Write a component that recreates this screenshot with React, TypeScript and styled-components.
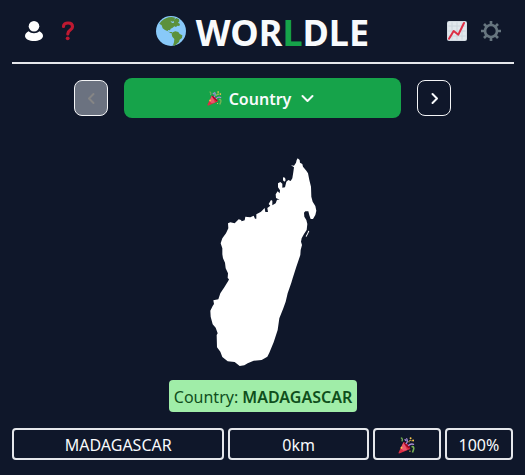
import React from "react";
import styled, { createGlobalStyle } from "styled-components";

const GlobalStyle = createGlobalStyle`
  *, *::before, *::after { box-sizing: border-box; }
  body {
    margin: 0;
    background: #0f172a;
    color: #f8fafc;
    font-family: "Segoe UI", "Noto Sans", "Open Sans", sans-serif;
    font-size: 16px;
    line-height: 24px;
  }
  button { font: inherit; color: inherit; margin: 0; padding: 0; cursor: pointer; }
  svg { display: block; flex: none; }
`;

const Page = styled.main`
  display: flex;
  flex-direction: column;
  padding: 0 11px 0 12px;
`;

const Header = styled.header`
  display: flex;
  align-items: center;
  justify-content: space-between;
  height: 64px;
  padding: 0 13px 0 12px;
  border-bottom: 2px solid #e5e7eb;
`;

const IconGroup = styled.div`
  display: flex;
  align-items: center;
  gap: 14px;
`;

const IconButton = styled.button`
  display: flex;
  border: 0;
  background: none;
`;

const Title = styled.h1`
  display: flex;
  align-items: center;
  gap: 10px;
  margin: 0;
  padding-top: 3px;
  font-size: 36px;
  line-height: 40px;
  font-weight: 700;
`;

const GlobeSlot = styled.span`
  padding-bottom: 3px;
`;

const Accent = styled.span`
  color: #16a34a;
`;

const RoundNav = styled.nav`
  display: flex;
  align-items: center;
  justify-content: center;
  gap: 16px;
  padding: 14px 63px 0 62px;
`;

const StepButton = styled.button`
  display: flex;
  flex: none;
  align-items: center;
  justify-content: center;
  width: 34px;
  height: 36px;
  border: 1px solid #f3f4f6;
  border-radius: 8px;
  background: transparent;
  &:disabled {
    background: #6b7280;
    color: #858585;
    cursor: default;
  }
`;

const RoundButton = styled.button`
  display: flex;
  flex: 1;
  align-items: center;
  justify-content: center;
  height: 40px;
  padding-right: 4px;
  border: 0;
  border-radius: 8px;
  background: #16a34a;
  font-weight: 600;
`;

const RoundName = styled.span`
  margin: 2px 10px 0 7px;
`;

const MapFigure = styled.figure`
  display: flex;
  justify-content: center;
  margin: 0;
  padding: 40px 0 13px;
`;

const Answer = styled.p`
  align-self: center;
  margin: 0;
  padding: 5px 5px 3px;
  border-radius: 4px;
  background: #a0eda8;
  color: #0f4f1c;
  strong { font-weight: 600; }
`;

const GuessRow = styled.div`
  display: grid;
  grid-template-columns: repeat(7, 1fr);
  gap: 4px;
  margin: 16px 1px 0 0;
`;

const Cell = styled.div<{ $span?: number }>`
  grid-column: span ${(p) => p.$span ?? 1};
  display: flex;
  align-items: center;
  justify-content: center;
  height: 32px;
  padding-top: 2px;
  border: 2px solid #e5e7eb;
  border-radius: 4px;
`;

const UserIcon = () => (
  <svg width="20" height="22" viewBox="0 0 20 22" fill="#fff">
    <circle cx="10" cy="6.2" r="5.3" />
    <path d="M4.5 11.3C2.5 12.3 1 14 1 16c0 3 4.5 5 9 5s9-2 9-5c0-2-1.5-3.7-3.5-4.7-1.4 1.3-3.3 2-5.5 2s-4.1-.7-5.5-2z" />
  </svg>
);

const QuestionIcon = () => (
  <svg width="20" height="22" viewBox="0 0 20 22">
    <path d="M5.5 6.4C5.5 4.2 7.6 3 10 3c2.7 0 4.5 1.5 4.5 3.7 0 3.8-4.7 2.9-4.7 7.2" fill="none" stroke="#be1931" strokeWidth="3.2" strokeLinecap="round" />
    <circle cx="9.7" cy="18.3" r="1.9" fill="#be1931" />
  </svg>
);

const GlobeIcon = () => (
  <svg width="30" height="30" viewBox="0 0 90 90">
    <circle cx="45" cy="45" r="45" fill="#88c9f9" />
    <path fill="#5c913b" d="M16 16C24 8 34 3 47 3L58 5 54 11 61 6 69 10 70 16 66 20 72 24 70 30 64 29 60 33 55 31 50 35 44 38 42 43 36 42 35 46 41 48 48 48 50 53 43 51 34 45 27 42 20 37 17 28 10 23z" />
    <path fill="#88c9f9" d="m44 14 4 3 6-1 0 4-5 1-4-3z" />
    <path fill="#5c913b" d="M50 49L58 46 67 48 71 54 79 58 78 66 71 71 69 78 62 84 56 89 51 88 54 79 55 69 49 62 47 55z" />
  </svg>
);

const ChartIcon = () => (
  <svg width="20" height="20" viewBox="0 0 60 60">
    <rect width="60" height="60" rx="6" fill="#ccd6dd" />
    <rect x="2" y="2" width="56" height="56" rx="5" fill="#e1e8ed" />
    <path d="M15 4v52M30 4v52M45 4v52M4 15h52M4 30h52M4 45h52" stroke="#ccd6dd" strokeWidth="3" />
    <path d="m6 53 14-23 14 11L51 6" fill="none" stroke="#dd2e44" strokeWidth="6" strokeLinecap="round" strokeLinejoin="round" />
  </svg>
);

const GearIcon = () => (
  <svg width="20" height="20" viewBox="0 0 60 60" stroke="#66757f" fill="none">
    <circle cx="30" cy="30" r="18" strokeWidth="8" />
    <path
      d="M30 0v12M30 48v12M0 30h12M48 30h12M9 9l8 8M43 43l8 8M9 51l8-8M43 17l8-8"
      strokeWidth="8"
    />
  </svg>
);

const PartyIcon = ({ size }: { size: number }) => (
  <svg width={size} height={size} viewBox="0 0 54 54" fill="none">
    <path d="M17 17 2 49c-1 3 1 4 4 3l33-14C38 29 27 18 17 17z" fill="#dd2e44" />
    <path d="M18 17 9 36l8 8 12-3z" fill="#ea596e" />
    <ellipse cx="28" cy="27" rx="3" ry="13" transform="rotate(-45 28 27)" fill="#a0041e" />
    <path d="M9 3c6 1 6 7 3 11" stroke="#77b255" strokeWidth="4" />
    <path d="M25 22c6-5 6-11 2-18M21 7l5 5" stroke="#aa8dd8" strokeWidth="4" />
    <path d="M32 28c5-5 11-8 19-4" stroke="#aa8dd8" strokeWidth="4" />
    <path d="M35 17c-2-5 4-8 8-5" stroke="#ffcc4d" strokeWidth="3" />
    <path d="M43 31c8-2 8 5 6 10l-3 8" stroke="#77b255" strokeWidth="5" />
    <g fill="#ffcc4d">
      <circle cx="40" cy="4" r="3" />
      <circle cx="48" cy="11" r="3" />
      <circle cx="11" cy="34" r="3" />
      <circle cx="38" cy="45" r="2" />
    </g>
  </svg>
);

type Direction = "left" | "right" | "down";

const chevrons: Record<Direction, string> = {
  left: "M8.5 2 4 6.5 8.5 11",
  right: "M4.5 2 9 6.5 4.5 11",
  down: "M1.5 4 6.5 9 11.5 4",
};

const Chevron = ({ to }: { to: Direction }) => (
  <svg width="13" height="13" viewBox="0 0 13 13" fill="none" stroke="currentColor" strokeWidth="2" strokeLinecap="round" strokeLinejoin="round">
    <path d={chevrons[to]} />
  </svg>
);

const mainland =
  "M292 25L298 30 299 38 306 42 308 50 318 62 323 70 327 90 332 110 333 140 337 155 345 168 348 182 345 195 338 207 331 207 327 196 324 184 315 184 311 188 312 200 318 210 321 222 319 240 311 252 304 265 302 275 305 285 301 300 300 315 " +
  "288 350 277 385 273 398 262 430 256 455 249 475 237 505 232 540 220 577 207 608 201 620 184 630 160 632 142 640 132 646 118 648 103 636 82 634 66 621 60 605 50 592 49 555 52 550 46 533 37 523 31 500 30 482 37 468 41 462 39 451 54 448 60 430 72 412 84 392 86 388 82 384 83 370 76 355 74 338 68 325 66 313 " +
  "66 295 61 280 66 265 77 250 84 235 83 220 90 217 103 220 115 208 122 210 124 214 133 211 135 200 150 202 160 197 164 206 168 206 168 193 182 185 193 174 195 186 203 186 201 174 210 167 205 162 212 150 216 152 216 166 226 160 230 149 238 149 227 144 226 133 232 124 238 130 239 121 233 112 233 100 240 96 246 101 246 113 254 112 258 95 264 90 271 93 276 85 279 66 281 52 272 46 281 47 287 38 289 30z";

const islets = "M248 82L254 83 256 91 252 95 248 91zM324 242L327 243 323 252 318 261 316 259 321 250z";

const CountryShape = () => (
  <svg width="107" height="209" viewBox="29 24 321 627" fill="#fff" role="img" aria-label="Country outline">
    <path d={mainland} />
    <path d={islets} />
  </svg>
);

export default function App() {
  return (
    <>
      <GlobalStyle />
      <Page>
        <Header>
          <IconGroup>
            <IconButton aria-label="Profile"><UserIcon /></IconButton>
            <IconButton aria-label="How to play"><QuestionIcon /></IconButton>
          </IconGroup>
          <Title>
            <GlobeSlot><GlobeIcon /></GlobeSlot>
            <span>WOR<Accent>L</Accent>DLE</span>
          </Title>
          <IconGroup>
            <IconButton aria-label="Statistics"><ChartIcon /></IconButton>
            <IconButton aria-label="Settings"><GearIcon /></IconButton>
          </IconGroup>
        </Header>
        <RoundNav aria-label="Rounds">
          <StepButton aria-label="Previous round" disabled><Chevron to="left" /></StepButton>
          <RoundButton>
            <PartyIcon size={15} />
            <RoundName>Country</RoundName>
            <Chevron to="down" />
          </RoundButton>
          <StepButton aria-label="Next round"><Chevron to="right" /></StepButton>
        </RoundNav>
        <MapFigure><CountryShape /></MapFigure>
        <Answer>Country: <strong>MADAGASCAR</strong></Answer>
        <GuessRow>
          <Cell $span={3}>MADAGASCAR</Cell>
          <Cell $span={2}>0km</Cell>
          <Cell><PartyIcon size={17} /></Cell>
          <Cell>100%</Cell>
        </GuessRow>
      </Page>
    </>
  );
}
